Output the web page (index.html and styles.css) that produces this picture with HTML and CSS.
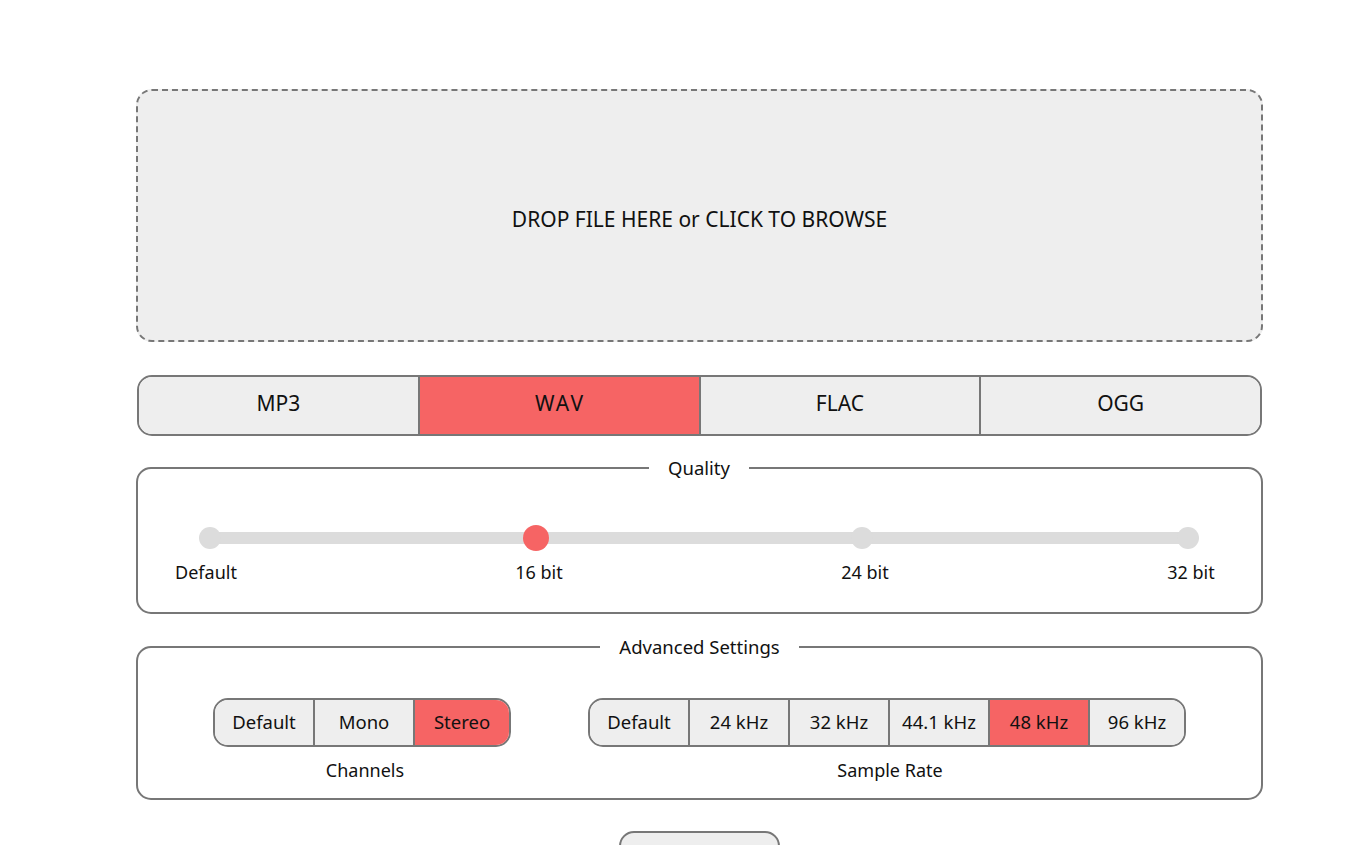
FILE: index.html
```html
<!DOCTYPE html>
<html lang="en">
<head>
<meta charset="utf-8">
<title>Audio Converter</title>
<link rel="stylesheet" href="styles.css">
</head>
<body>
<main class="app">
  <div class="dropzone">DROP FILE HERE or CLICK TO BROWSE</div>

  <div class="formats">
    <div class="format">MP3</div>
    <div class="format active">WAV</div>
    <div class="format">FLAC</div>
    <div class="format">OGG</div>
  </div>

  <fieldset class="group quality">
    <legend>Quality</legend>
    <div class="slider">
      <div class="stop"><span class="dot"></span><span class="stop-label">Default</span></div>
      <div class="stop"><span class="dot active"></span><span class="stop-label">16 bit</span></div>
      <div class="stop"><span class="dot"></span><span class="stop-label">24 bit</span></div>
      <div class="stop"><span class="dot"></span><span class="stop-label">32 bit</span></div>
    </div>
  </fieldset>

  <fieldset class="group advanced">
    <legend>Advanced Settings</legend>
    <div class="adv-row">
      <div class="setting">
        <div class="seg">
          <div class="opt">Default</div>
          <div class="opt">Mono</div>
          <div class="opt active">Stereo</div>
        </div>
        <div class="setting-label">Channels</div>
      </div>
      <div class="setting">
        <div class="seg">
          <div class="opt">Default</div>
          <div class="opt">24 kHz</div>
          <div class="opt">32 kHz</div>
          <div class="opt">44.1 kHz</div>
          <div class="opt active">48 kHz</div>
          <div class="opt">96 kHz</div>
        </div>
        <div class="setting-label">Sample Rate</div>
      </div>
    </div>
  </fieldset>

  <div class="actions">
    <button class="convert">Convert</button>
  </div>
</main>
</body>
</html>
```

FILE: styles.css
```css
html, body {
  margin: 0;
  padding: 0;
  background: #fff;
}

body {
  font-family: "Noto Sans", "Open Sans", sans-serif;
  color: #111;
}

.app {
  margin: 89px 99px 0 136px;
  display: flex;
  flex-direction: column;
}

.dropzone {
  box-sizing: border-box;
  height: 253px;
  border: 2px dashed #777;
  border-radius: 16px;
  background: #eee;
  display: flex;
  align-items: center;
  justify-content: center;
  padding-top: 6px;
  font-size: 21px;
}

.formats {
  margin: 33px 1px 0 1px;
  box-sizing: border-box;
  height: 61px;
  border: 2px solid #777;
  border-radius: 15px;
  overflow: hidden;
  display: flex;
}

.format {
  flex: 1;
  display: flex;
  align-items: center;
  justify-content: center;
  background: #eee;
  border-left: 2px solid #777;
  font-size: 21px;
  padding-bottom: 6px;
}

.format:first-child {
  border-left: none;
}

.format.active {
  background: #f66464;
  letter-spacing: 2.2px;
  text-indent: 2px;
}

.group {
  margin: 21px 0 0;
  border: 2px solid #777;
  border-radius: 15px;
  min-width: 0;
}

.group legend {
  margin: 0 auto;
  padding: 0 19px;
  font-size: 18.5px;
  line-height: 22px;
}

.quality {
  padding: 46px 33px 29px 32px;
}

.slider {
  position: relative;
  display: flex;
  justify-content: space-between;
}

.slider::before {
  content: "";
  position: absolute;
  left: 40px;
  right: 40px;
  top: 7px;
  height: 12px;
  border-radius: 6px;
  background: #dcdcdc;
}

.stop {
  position: relative;
  width: 80px;
  display: flex;
  flex-direction: column;
  align-items: center;
}

.dot {
  width: 26px;
  height: 26px;
  display: flex;
  align-items: center;
  justify-content: center;
}

.dot::after {
  content: "";
  width: 22px;
  height: 22px;
  border-radius: 50%;
  background: #dcdcdc;
}

.dot.active::after {
  width: 26px;
  height: 26px;
  background: #f66464;
}

.stop-label {
  margin-top: 10px;
  margin-left: 6px;
  font-size: 18px;
  line-height: 22px;
  white-space: nowrap;
}

.stop:first-child .stop-label {
  margin-left: 0;
  margin-right: 8px;
}

.advanced {
  margin-top: 22px;
  padding: 40px 0 17px;
}

.adv-row {
  display: flex;
  justify-content: center;
  gap: 77px;
}

.setting {
  display: flex;
  flex-direction: column;
  align-items: center;
}

.seg {
  display: flex;
  box-sizing: border-box;
  height: 49px;
  border: 2px solid #777;
  border-radius: 15px;
  overflow: hidden;
}

.opt {
  box-sizing: border-box;
  width: 100px;
  border-right: 2px solid #777;
  background: #eee;
  display: flex;
  align-items: center;
  justify-content: center;
  font-size: 18.5px;
  padding-bottom: 2px;
}

.opt:last-child {
  width: 94px;
  border-right: none;
}

.opt.active {
  background: #f66464;
}

.setting-label {
  margin-top: 12px;
  margin-left: 6px;
  font-size: 18px;
  line-height: 22px;
}

.actions {
  margin-top: 31px;
  display: flex;
  justify-content: center;
}

.convert {
  box-sizing: border-box;
  width: 161px;
  height: 60px;
  border: 2px solid #777;
  border-radius: 15px;
  background: #eee;
  font-family: inherit;
  font-size: 21px;
  color: #111;
  padding-top: 26px;
}
```
